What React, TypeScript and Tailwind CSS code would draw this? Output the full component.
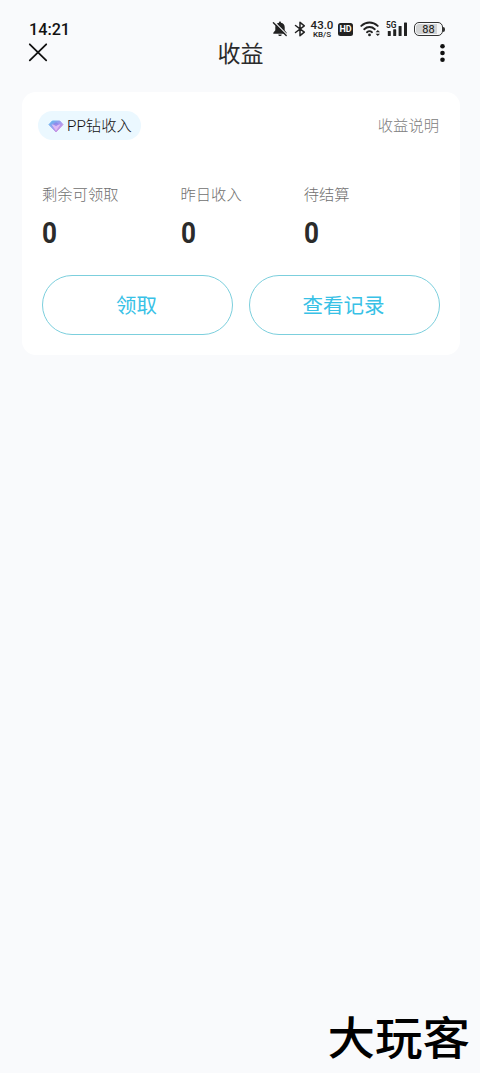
const stats = [
  { label: '剩余可领取', value: 0 },
  { label: '昨日收入', value: 0 },
  { label: '待结算', value: 0 },
];

function BellOffIcon() {
  return (
    <svg className="h-4 w-4" viewBox="0 0 16 16" fill="#222">
      <path d="M8 .6c.7 0 1 .5 1 1.100 2.300.5 3.700 2.100 3.700 4.300v3.200l2 2.500v1H1.300v-1l2-2.500V6c0-2.200 1.400-3.800 3.700-4.300 0-.6.300-1.100 1-1.100z" />
      <path d="M6.300 13.400h3.400c0 1-.7 1.700-1.700 1.700s-1.700-.7-1.700-1.700z" />
      <path d="M2.400 1 15.200 13.800" stroke="#f9fafc" strokeWidth="1.200" />
      <path d="M1.400 1.800 14.200 14.600" stroke="#222" strokeWidth="1.400" strokeLinecap="round" />
    </svg>
  );
}

function BluetoothIcon() {
  return (
    <svg className="h-4 w-3" viewBox="0 0 12 16" fill="none" stroke="#222" strokeWidth="1.500" strokeLinejoin="round" strokeLinecap="round">
      <path d="M1.500 4.500 10.300 11.200 6 14.700V1.300l4.300 3.500-8.800 6.700" />
    </svg>
  );
}

function WifiIcon() {
  return (
    <svg className="h-4 w-[21px]" viewBox="0 0 21 16" fill="none" stroke="#222" strokeWidth="1.900" strokeLinecap="round">
      <path d="M1.300 4.900c4.800-4.600 11.600-4.600 16.400 0" />
      <path d="M4.200 8.200c3.100-2.900 7.500-2.900 10.600 0" />
      <path d="M7 11.200c1.500-1.300 3.500-1.300 5 0" />
      <circle cx="9.500" cy="13.900" r="1.400" fill="#222" stroke="none" />
      <path d="m15.600 11.200 2.200-2.200 2.200 2.200zM15.600 12.800l2.200 2.200 2.200-2.200z" fill="#222" stroke="none" />
    </svg>
  );
}

function SignalIcon() {
  return (
    <svg className="h-4 w-[22px]" viewBox="0 0 22 16" fill="#222">
      <rect x="1.800" y="10" width="3" height="5" rx=".6" />
      <rect x="7.200" y="8.300" width="3" height="6.700" rx=".6" />
      <rect x="12.600" y="5" width="3" height="10" rx=".6" />
      <rect x="18" y="1.500" width="3" height="13.500" rx=".6" />
      <text x="0" y="7.300" fontSize="9" fontWeight="600" fontFamily="Roboto, sans-serif" textLength="10.500" lengthAdjust="spacingAndGlyphs">5G</text>
    </svg>
  );
}

function Battery({ level }: { level: number }) {
  return (
    <div className="flex items-center">
      <div className="flex h-[14px] w-[29px] items-center justify-center rounded-[5px] border border-[#333] p-px">
        <div className="flex h-full w-full items-center justify-center rounded-[3px] bg-gradient-to-r from-[#d2d3d4] from-85% to-[#f4f5f6] to-85% text-[11px] leading-none text-[#111]">
          {level}
        </div>
      </div>
      <div className="h-[5px] w-[2px] rounded-r-full bg-[#333]" />
    </div>
  );
}

function StatusBar() {
  return (
    <div className="flex h-[16px] items-center pr-[35px] pl-[29px]">
      <span className="pt-px text-[16.200px] leading-4 font-medium text-[#111]">14:21</span>
      <div className="ml-auto flex items-center">
        <BellOffIcon />
        <div className="ml-[6px]"><BluetoothIcon /></div>
        <div className="ml-[4px] flex h-4 w-[24px] flex-col items-center justify-center font-medium text-[#222]">
          <span className="text-[11.500px] leading-[10px]">43.0</span>
          <span className="text-[8px] leading-[9px]">KB/S</span>
        </div>
        <span className="ml-[4px] flex h-[13px] w-[15px] items-center justify-center rounded-[2.500px] bg-[#222] text-[9px] leading-none font-bold text-white">HD</span>
        <div className="ml-[7px]"><WifiIcon /></div>
        <div className="ml-[5px]"><SignalIcon /></div>
        <div className="ml-[6px]"><Battery level={88} /></div>
      </div>
    </div>
  );
}

function DiamondIcon() {
  return (
    <svg className="h-[14px] w-4" viewBox="0 0 16 14">
      <defs>
        <linearGradient id="gem" x1="0" y1="0" x2="1" y2="1">
          <stop offset="0" stopColor="#5cb8ee" />
          <stop offset=".5" stopColor="#a49af0" />
          <stop offset="1" stopColor="#ed8fd4" />
        </linearGradient>
      </defs>
      <path d="M4.300 2h7.500L15 5.600 8 13 1 5.600z" fill="url(#gem)" stroke="url(#gem)" strokeLinejoin="round" />
      <path d="M3.500 5.600h9L8 11.800z" fill="#f0c4f5" opacity=".75" />
      <path d="m5 5.300 3-2 3 2-3 2z" fill="#8b7fe8" opacity=".7" />
    </svg>
  );
}

export default function App() {
  return (
    <div className="flex min-h-screen w-full flex-col bg-[#f9fafc] pt-[21px] font-[Roboto,'Noto_Sans_CJK_SC',sans-serif]">
      <StatusBar />

      <header className="grid h-[32px] grid-cols-[1fr_auto_1fr] grid-rows-[32px] items-center pr-[35px] pl-[28px]">
        <button className="flex w-5 justify-center" aria-label="关闭">
          <svg className="h-5 w-5" viewBox="0 0 20 20" fill="none" stroke="#111" strokeWidth="1.800" strokeLinecap="round">
            <path d="M1.800 1.300 18.200 17.300M18.200 1.300 1.800 17.300" />
          </svg>
        </button>
        <h1 className="translate-y-[2px] pl-[8px] text-[23px] leading-8 text-[#2b2b2b]">收益</h1>
        <button className="flex w-5 justify-end justify-self-end" aria-label="更多">
          <svg className="h-5 w-[5px]" viewBox="0 0 5 20" fill="#111">
            <circle cx="2.500" cy="3.200" r="2.300" />
            <circle cx="2.500" cy="10" r="2.300" />
            <circle cx="2.500" cy="16.800" r="2.300" />
          </svg>
        </button>
      </header>

      <main className="mt-[23px] ml-[22px] h-[263px] w-[438px] rounded-[14px] bg-white pt-[19px]">
        <div className="flex items-center justify-between pr-[21px] pl-4">
          <div className="flex h-[29px] w-[103px] items-center gap-1 rounded-full bg-[#ebf8ff] pl-[10px]">
            <DiamondIcon />
            <span className="-ml-px pt-[2px] text-[15.300px] leading-none font-light whitespace-nowrap text-[#111]">PP钻收入</span>
          </div>
          <span className="pt-[2px] text-[15.300px] leading-none font-light text-[#808080]">收益说明</span>
        </div>

        <div className="mt-[47px] flex gap-[62px] pl-5">
          {stats.map((s) => (
            <div key={s.label}>
              <div className="text-[15.300px] leading-4 font-light text-[#6f6f6f]">{s.label}</div>
              <div className="mt-[15px] w-[15px] origin-left scale-x-90 text-[29px] leading-[30px] font-bold text-[#2b2b2b]">{s.value}</div>
            </div>
          ))}
        </div>

        <div className="mt-[27px] flex gap-4 px-5">
          {['领取', '查看记录'].map((label) => (
            <button key={label} className="h-[60px] flex-1 rounded-full border border-[#7ccfdd] pt-[2px] pr-[2px] text-[20.500px] leading-none text-[#38c1e6]">
              {label}
            </button>
          ))}
        </div>
      </main>

      <footer className="mt-auto flex justify-end pr-[10px] pb-[9px]">
        <span className="origin-center scale-y-95 text-[47.500px] leading-[48px] font-medium text-black">大玩客</span>
      </footer>
    </div>
  );
}
